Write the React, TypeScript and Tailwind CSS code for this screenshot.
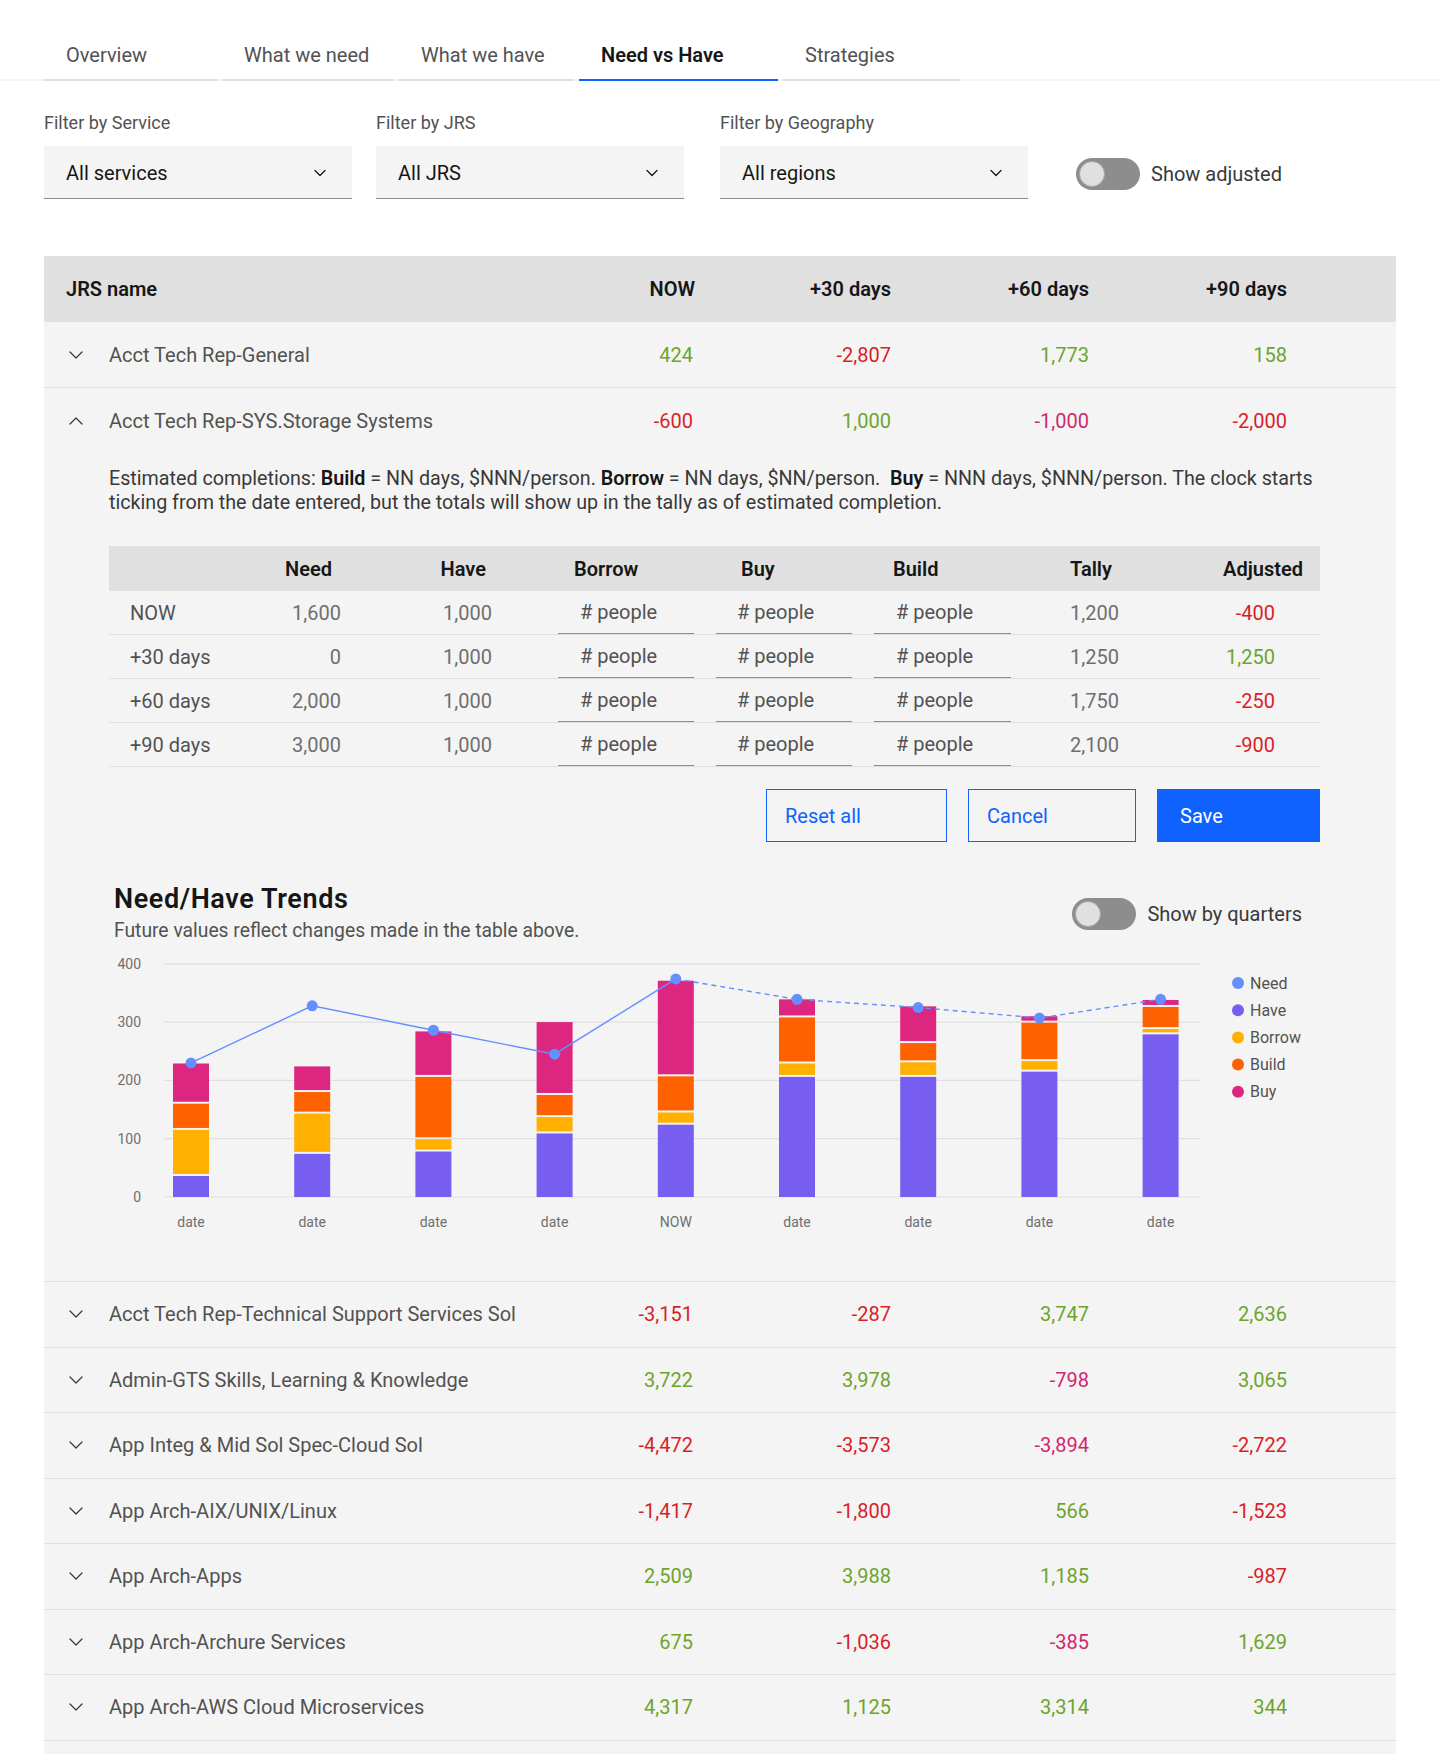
import { ChevronDown, ChevronUp } from "lucide-react";

type Row = { name: string; vals: string[] };

const topRows: Row[] = [
  { name: "Acct Tech Rep-General", vals: ["424", "-2,807", "1,773", "158"] },
];

const expandedRow: Row = {
  name: "Acct Tech Rep-SYS.Storage Systems",
  vals: ["-600", "1,000", "-1,000", "-2,000"],
};

const bottomRows: Row[] = [
  { name: "Acct Tech Rep-Technical Support Services Sol", vals: ["-3,151", "-287", "3,747", "2,636"] },
  { name: "Admin-GTS Skills, Learning & Knowledge", vals: ["3,722", "3,978", "-798", "3,065"] },
  { name: "App Integ & Mid Sol Spec-Cloud Sol", vals: ["-4,472", "-3,573", "-3,894", "-2,722"] },
  { name: "App Arch-AIX/UNIX/Linux", vals: ["-1,417", "-1,800", "566", "-1,523"] },
  { name: "App Arch-Apps", vals: ["2,509", "3,988", "1,185", "-987"] },
  { name: "App Arch-Archure Services", vals: ["675", "-1,036", "-385", "1,629"] },
  { name: "App Arch-AWS Cloud Microservices", vals: ["4,317", "1,125", "3,314", "344"] },
];

const tabs = [
  { label: "Overview", w: "w-[173px]" },
  { label: "What we need", w: "w-[172px]" },
  { label: "What we have", w: "w-[175px]" },
  { label: "Need vs Have", w: "w-[199px]", active: true },
  { label: "Strategies", w: "w-[177px]" },
];

const innerRows = [
  { label: "NOW", need: "1,600", have: "1,000", tally: "1,200", adj: "-400" },
  { label: "+30 days", need: "0", have: "1,000", tally: "1,250", adj: "1,250" },
  { label: "+60 days", need: "2,000", have: "1,000", tally: "1,750", adj: "-250" },
  { label: "+90 days", need: "3,000", have: "1,000", tally: "2,100", adj: "-900" },
];

// stacked segment tops per bar: have, borrow, build, buy
const bars = [
  [36, 115, 160, 229],
  [74, 143, 180, 224],
  [78, 99, 206, 284],
  [109, 137, 175, 300],
  [124, 145, 207, 371],
  [206, 229, 308, 339],
  [206, 231, 264, 327],
  [215, 233, 299, 310],
  [279, 288, 326, 338],
];
const needLine = [230, 328, 286, 245, 374, 339, 325, 307, 339];
const xLabels = ["date", "date", "date", "date", "NOW", "date", "date", "date", "date"];
const segColors = ["#785ef0", "#ffb000", "#fe6100", "#dc267f"];

const GREEN = "text-[#6da52b]";
const RED = "text-[#da1e28]";
const PINK = "text-[#d12771]";

function valColor(v: string, col: number) {
  if (!v.startsWith("-")) return GREEN;
  return col === 2 ? PINK : RED;
}

function Toggle({ label }: { label: string }) {
  return (
    <div className="flex items-center">
      <div className="relative w-[64px] h-[32px] rounded-full bg-[#8d8d8d]">
        <div className="absolute left-[3px] top-[3px] w-[26px] h-[26px] rounded-full bg-[#e0e0e0] border border-[#a8a8a8]" />
      </div>
      <span className="ml-[11px] text-[20px] text-[#393939]">{label}</span>
    </div>
  );
}

function Select({ label, value, className }: { label: string; value: string; className?: string }) {
  return (
    <div className={`w-[308px] ${className ?? ""}`}>
      <div className="text-[18px] leading-[24px] text-[#525252]">{label}</div>
      <div className="mt-[11px] h-[53px] bg-[#f4f4f4] border-b border-[#8d8d8d] flex items-center justify-between pl-[22px] pr-[22px] pt-[2px]">
        <span className="text-[20px] text-[#161616]">{value}</span>
        <ChevronDown size={20} strokeWidth={1.5} className="text-[#161616]" />
      </div>
    </div>
  );
}

function RowHead({ row, open }: { row: Row; open?: boolean }) {
  return (
    <div className="grid grid-cols-[453px_198px_198px_198px_198px_1fr] h-[65px] items-center text-[20px]">
      <div className="flex items-center pl-[20px] text-[#525252] min-w-0">
        {open ? (
          <ChevronUp size={24} strokeWidth={1.3} className="text-[#393939] shrink-0" />
        ) : (
          <ChevronDown size={24} strokeWidth={1.3} className="text-[#393939] shrink-0" />
        )}
        <span className="ml-[21px] whitespace-nowrap">{row.name}</span>
      </div>
      {row.vals.map((v, i) => (
        <div key={i} className={`text-right pr-[2px] ${valColor(v, i)}`}>
          {v}
        </div>
      ))}
      <div />
    </div>
  );
}

function Chart() {
  const base = 247;
  const k = 0.583;
  const cx = (i: number) => 82 + 121.2 * i;
  const yv = (v: number) => base - v * k;
  const pts = needLine.map((v, i) => `${cx(i)},${yv(v)}`);
  return (
    <svg width="1211" height="290" className="block mt-[7px]">
      {[0, 100, 200, 300, 400].map((g) => (
        <g key={g}>
          <line x1={55} x2={1091} y1={yv(g)} y2={yv(g)} stroke="#e0e0e0" strokeWidth={1.2} />
          <text x={32} y={yv(g) + 5} textAnchor="end" fontSize={14} fill="#6f6f6f">
            {g}
          </text>
        </g>
      ))}
      {bars.map((b, i) => {
        const bounds = [0, ...b];
        return (
          <g key={i}>
            {segColors.map((c, s) => {
              const top = yv(bounds[s + 1]);
              const bot = yv(bounds[s]) - (s === 0 ? 0 : 2);
              return <rect key={s} x={cx(i) - 18} y={top} width={36} height={Math.max(bot - top, 1)} fill={c} />;
            })}
            <text x={cx(i)} y={277} textAnchor="middle" fontSize={14} fill="#6f6f6f">
              {xLabels[i]}
            </text>
          </g>
        );
      })}
      <polyline points={pts.slice(0, 5).join(" ")} fill="none" stroke="#648fff" strokeWidth={1.4} />
      <polyline points={pts.slice(4).join(" ")} fill="none" stroke="#648fff" strokeWidth={1.4} strokeDasharray="5 4" />
      {needLine.map((v, i) => (
        <circle key={i} cx={cx(i)} cy={yv(v)} r={5.5} fill="#648fff" />
      ))}
      {[
        ["Need", "#648fff"],
        ["Have", "#785ef0"],
        ["Borrow", "#ffb000"],
        ["Build", "#fe6100"],
        ["Buy", "#dc267f"],
      ].map(([l, c], i) => (
        <g key={l}>
          <circle cx={1129} cy={33 + 27.2 * i} r={6} fill={c} />
          <text x={1141} y={33 + 27.2 * i + 5.5} fontSize={16} fill="#525252">
            {l}
          </text>
        </g>
      ))}
    </svg>
  );
}

export default function App() {
  return (
    <div className="min-h-[1754px] bg-white font-[Roboto,'Liberation_Sans',sans-serif] text-[#161616]">
      {/* tabs */}
      <div className="pt-[31px] border-b-2 border-[#f4f4f4]">
        <div className="flex gap-[5px] pl-[44px] -mb-[2px]">
          {tabs.map((t) => (
            <div
              key={t.label}
              className={`${t.w} h-[50px] pt-[12px] pl-[22px] text-[20px] leading-[24px] border-b-2 ${
                t.active ? "border-[#0f62fe] text-[#161616] font-semibold" : "border-[#e0e0e0] text-[#525252]"
              }`}
            >
              {t.label}
            </div>
          ))}
        </div>
      </div>

      {/* filters */}
      <div className="flex items-end px-[44px] pt-[30px]">
        <Select label="Filter by Service" value="All services" />
        <Select label="Filter by JRS" value="All JRS" className="ml-[24px]" />
        <Select label="Filter by Geography" value="All regions" className="ml-[36px]" />
        <div className="ml-[48px] h-[53px] flex items-center pt-[2px]">
          <Toggle label="Show adjusted" />
        </div>
      </div>

      {/* table */}
      <div className="mx-[44px] mt-[57px] bg-[#f4f4f4]">
        <div className="grid grid-cols-[453px_198px_198px_198px_198px_1fr] h-[66px] items-center bg-[#e0e0e0] text-[20px] font-semibold text-[#161616]">
          <div className="pl-[22px]">JRS name</div>
          <div className="text-right">NOW</div>
          <div className="text-right pr-[2px]">+30 days</div>
          <div className="text-right pr-[2px]">+60 days</div>
          <div className="text-right pr-[2px]">+90 days</div>
          <div />
        </div>

        {topRows.map((r) => (
          <div key={r.name} className="border-b border-[#e0e0e0]">
            <RowHead row={r} />
          </div>
        ))}

        {/* expanded row */}
        <div className="border-b border-[#e0e0e0] pb-[41px]">
          <RowHead row={expandedRow} open />
          <div className="pl-[65px] pr-[76px]">
            <p className="mt-[14px] text-[19.7px] leading-[24px] text-[#393939]">
              Estimated completions: <b className="font-semibold text-[#161616]">Build</b> = NN days, $NNN/person.{" "}
              <b className="font-semibold text-[#161616]">Borrow</b> = NN days, $NN/person.&nbsp;{" "}
              <b className="font-semibold text-[#161616]">Buy</b> = NNN days, $NNN/person. The clock starts ticking from the
              date entered, but the totals will show up in the tally as of estimated completion.
            </p>

            <div className="mt-[31px] text-[20px]">
              <div className="grid grid-cols-[130px_115px_149px_203px_157px_176px_140px_140px] h-[45px] items-center bg-[#e0e0e0] font-semibold text-[#161616]">
                <div />
                <div className="text-right pr-[22px]">Need</div>
                <div className="text-right pr-[17px]">Have</div>
                <div className="pl-[71px]">Borrow</div>
                <div className="pl-[35px]">Buy</div>
                <div className="pl-[30px]">Build</div>
                <div className="pl-[31px]">Tally</div>
                <div className="text-right pr-[16px]">Adjusted</div>
              </div>
              {innerRows.map((r) => (
                <div
                  key={r.label}
                  className="grid grid-cols-[130px_115px_149px_203px_157px_176px_140px_140px] h-[44px] items-stretch border-b border-[#e0e0e0]"
                >
                  <div className="flex items-center pl-[21px] text-[#525252]">{r.label}</div>
                  <div className="flex items-center justify-end pr-[13px] text-[#6f6f6f]">{r.need}</div>
                  <div className="flex items-center justify-end pr-[11px] text-[#6f6f6f]">{r.have}</div>
                  <div className="pl-[55px]">
                    <div className="w-[136px] h-full -mb-px border-b-[1.5px] border-[#8d8d8d] flex items-center pl-[22px] text-[#525252]">
                      # people
                    </div>
                  </div>
                  <div className="pl-[10px]">
                    <div className="w-[136px] h-full -mb-px border-b-[1.5px] border-[#8d8d8d] flex items-center pl-[21px] text-[#525252]">
                      # people
                    </div>
                  </div>
                  <div className="pl-[11px]">
                    <div className="w-[137px] h-full -mb-px border-b-[1.5px] border-[#8d8d8d] flex items-center pl-[22px] text-[#525252]">
                      # people
                    </div>
                  </div>
                  <div className="flex items-center pl-[31px] text-[#6f6f6f]">{r.tally}</div>
                  <div className={`flex items-center justify-end pr-[44px] ${r.adj.startsWith("-") ? RED : GREEN}`}>
                    {r.adj}
                  </div>
                </div>
              ))}
            </div>

            <div className="mt-[22px] flex justify-end gap-[21px] text-[20px]">
              <button className="w-[181px] h-[53px] border border-[#0f62fe] text-[#0f62fe] text-left pl-[18px]">Reset all</button>
              <button className="w-[168px] h-[53px] border border-[#0f62fe] text-[#0f62fe] text-left pl-[18px]">Cancel</button>
              <button className="w-[163px] h-[53px] bg-[#0f62fe] text-white text-left pl-[23px]">Save</button>
            </div>

            <div className="mt-[42px] flex items-center pl-[5px]">
              <div>
                <div className="text-[27px] leading-[30px] font-semibold tracking-[0.6px] text-[#161616]">Need/Have Trends</div>
                <div className="mt-[5px] text-[19.3px] leading-[24px] text-[#525252]">
                  Future values reflect changes made in the table above.
                </div>
              </div>
              <div className="ml-auto mr-[18px]">
                <Toggle label="Show by quarters" />
              </div>
            </div>

            <Chart />
          </div>
        </div>

        {bottomRows.map((r) => (
          <div key={r.name} className="border-b border-[#e0e0e0] h-[65.5px] flex flex-col justify-center">
            <RowHead row={r} />
          </div>
        ))}
        <div className="h-[65.5px]" />
      </div>
    </div>
  );
}
